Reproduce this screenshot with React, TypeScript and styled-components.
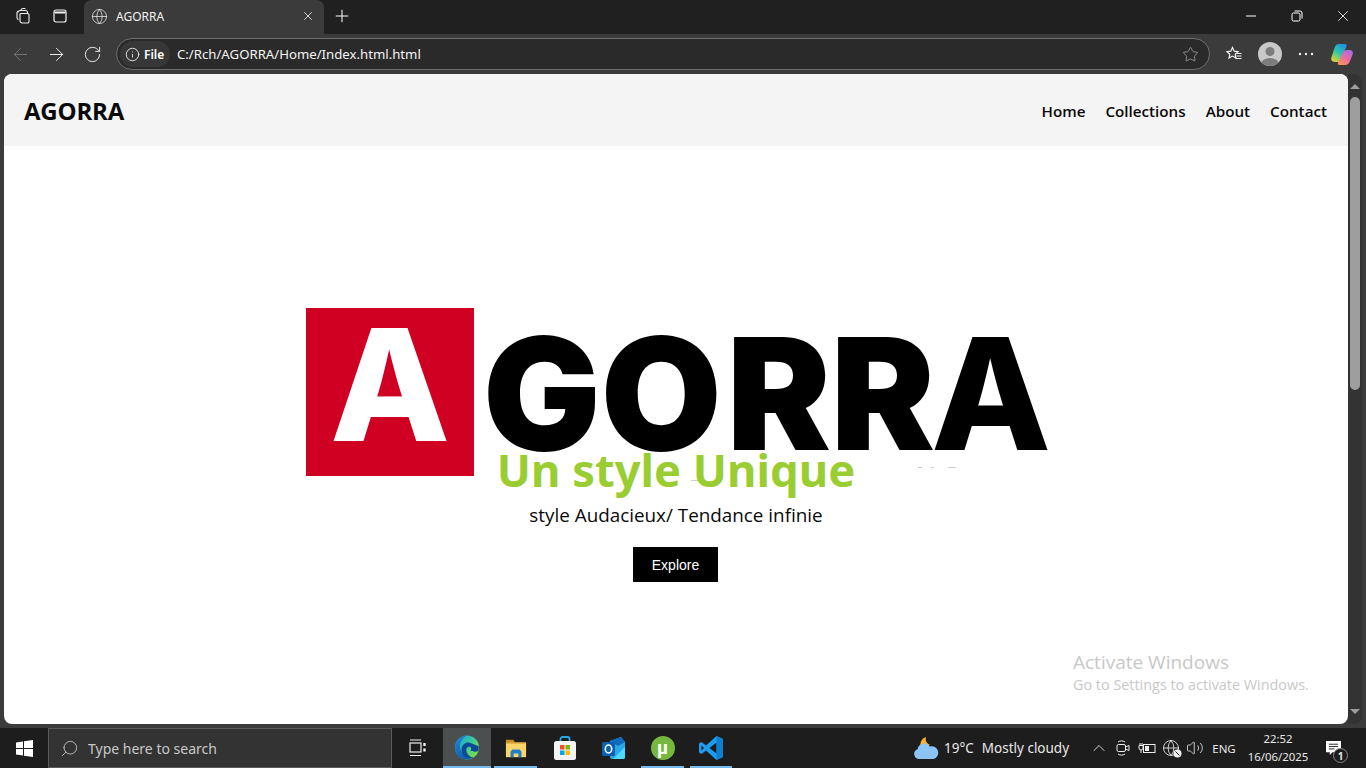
import React from "react";
import styled, { createGlobalStyle } from "styled-components";
import {
    ArrowLeft,
    ArrowRight,
    ChevronUp,
    Globe,
    Info,
    Plus,
    RotateCw,
    Search,
    Star,
    Volume2,
    X,
} from "lucide-react";

const GlobalStyle = createGlobalStyle`
    html, body {
        margin: 0;
        padding: 0;
        height: 100%;
        overflow: hidden;
        background: #1f1f1f;
    }
    * {
        box-sizing: border-box;
    }
`;

const UI_FONT = `"Noto Sans", "Open Sans", sans-serif`;

const Screen = styled.div`
    width: 1366px;
    height: 768px;
    display: flex;
    flex-direction: column;
    font-family: ${UI_FONT};
    background: #3b3b3b;
`;

const TabStrip = styled.div`
    height: 34px;
    display: flex;
    align-items: flex-start;
    background: #202020;
    color: #fff;
`;

const StripIcon = styled.div<{ $w: number }>`
    width: ${(p) => p.$w}px;
    height: 32px;
    display: flex;
    align-items: center;
    justify-content: center;
`;

const Tab = styled.div`
    width: 240px;
    height: 34px;
    padding: 0 9px 2px 7px;
    display: flex;
    align-items: center;
    background: #3b3b3b;
    border-radius: 8px 8px 0 0;
    font-size: 12px;
    color: #f2f2f2;
`;

const TabTitle = styled.span`
    flex: 1;
    margin-left: 8px;
`;

const WindowButtons = styled.div`
    margin-left: auto;
    display: flex;
`;

const WindowButton = styled.div`
    width: 46px;
    height: 32px;
    display: flex;
    align-items: center;
    justify-content: center;
`;

const Toolbar = styled.div`
    height: 40px;
    display: flex;
    align-items: center;
    padding-left: 2px;
    background: #3b3b3b;
    color: #fff;
`;

const NavButton = styled.div<{ $dim?: boolean }>`
    width: 36px;
    height: 32px;
    display: flex;
    align-items: center;
    justify-content: center;
    color: ${(p) => (p.$dim ? "#777" : "#f0f0f0")};
`;

const AddressBar = styled.div`
    width: 1094px;
    height: 32px;
    margin-left: 6px;
    padding: 0 10px 0 3px;
    display: flex;
    align-items: center;
    background: #2a2a2a;
    border: 1px solid #6e6e6e;
    border-radius: 16px;
`;

const FileChip = styled.div`
    width: 50px;
    height: 26px;
    padding-left: 5px;
    display: flex;
    align-items: center;
    gap: 4px;
    background: #373737;
    border-radius: 13px;
    font-size: 12px;
    font-weight: 600;
`;

const Url = styled.span`
    flex: 1;
    margin-left: 7px;
    font-size: 13.2px;
    color: #f4f4f4;
`;

const ToolActions = styled.div`
    display: flex;
    align-items: center;
    margin-left: 6px;
`;

const ToolAction = styled.div`
    width: 36px;
    height: 32px;
    display: flex;
    align-items: center;
    justify-content: center;
`;

const Avatar = styled.div`
    width: 24px;
    height: 24px;
    border-radius: 50%;
    overflow: hidden;
    background: #c9c9c9;
`;

const Viewport = styled.div`
    height: 650px;
    padding-left: 4px;
    display: flex;
    background: #3b3b3b;
`;

const Page = styled.main`
    position: relative;
    width: 1344px;
    height: 650px;
    display: flex;
    flex-direction: column;
    overflow: hidden;
    background: #fff;
    border-radius: 8px;
    font-family: "Open Sans", "Noto Sans", sans-serif;
`;

const Header = styled.header`
    height: 72px;
    flex: none;
    padding: 0 21px 0 20px;
    display: flex;
    align-items: center;
    justify-content: space-between;
    background: #f4f4f4;
    color: #0a0a0a;
`;

const Brand = styled.div`
    font-size: 24px;
    font-weight: 700;
    letter-spacing: -0.2px;
`;

const NavLinks = styled.nav`
    display: flex;
    gap: 20px;
    padding-top: 2px;
`;

const NavLink = styled.a`
    font-size: 15.2px;
    font-weight: 600;
    color: #0a0a0a;
`;

const Hero = styled.section`
    flex: 1;
    padding-top: 162px;
    display: flex;
    flex-direction: column;
    align-items: center;
`;

const Logo = styled.div`
    position: relative;
    width: 740px;
    height: 168px;
    display: flex;
    font-family: Inter, "Liberation Sans", sans-serif;
    line-height: 1;
`;

const LogoSquare = styled.div`
    width: 168px;
    height: 168px;
    flex: none;
    display: flex;
    justify-content: center;
    background: #d00022;
    color: #fff;
    font-size: 156px;
    font-weight: 800;
    line-height: 154px;
`;

const LogoWord = styled.div`
    margin-left: 9px;
    height: 168px;
    padding-top: 2px;
    font-size: 156px;
    line-height: 168px;
    color: #000;
    white-space: nowrap;
`;

const LogoLetter = styled.span<{ $track: number; $weight?: number }>`
    font-weight: ${(p) => p.$weight ?? 900};
    letter-spacing: ${(p) => p.$track}px;
`;

const Speck = styled.span<{ $x: number; $y: number; $w: number }>`
    position: absolute;
    left: ${(p) => p.$x}px;
    top: ${(p) => p.$y}px;
    width: ${(p) => p.$w}px;
    height: 1px;
    background: #cfcfcf;
`;

const Headline = styled.h1`
    position: relative;
    margin: -38px 0 0;
    font-family: "Noto Sans", "Open Sans", sans-serif;
    font-size: 45.3px;
    line-height: 64px;
    font-weight: 700;
    color: #9acd32;
`;

const Tagline = styled.p`
    margin: 0;
    font-size: 18.85px;
    line-height: 26px;
    color: #0a0a0a;
`;

const ExploreButton = styled.button`
    width: 85px;
    height: 35px;
    margin: 19px 1px 0 0;
    border: none;
    background: #000;
    color: #fff;
    font-family: "Liberation Sans", sans-serif;
    font-size: 14px;
    font-weight: 400;
`;

const Watermark = styled.div`
    position: absolute;
    left: 1069px;
    top: 575px;
    color: #c8c8c8;
    font-size: 14.4px;
    line-height: 20px;
`;

const WatermarkTitle = styled.div`
    font-size: 19px;
    line-height: 26px;
`;

const ScrollTrack = styled.div`
    width: 14px;
    height: 650px;
    padding: 4px 2px;
    display: flex;
    flex-direction: column;
    align-items: center;
    background: #333;
    border-radius: 0 8px 8px 0;
`;

const ScrollArrow = styled.div<{ $down?: boolean }>`
    width: 0;
    height: 0;
    flex: none;
    border-left: 5px solid transparent;
    border-right: 5px solid transparent;
    ${(p) =>
        p.$down
            ? "border-top: 5px solid #9e9e9e; margin: auto 0 6px;"
            : "border-bottom: 5px solid #9e9e9e; margin: 6px 0 8px;"}
`;

const ScrollThumb = styled.div`
    width: 10px;
    height: 293px;
    flex: none;
    border-radius: 5px;
    background: #9e9e9e;
`;

const Gap = styled.div`
    height: 4px;
    background: #3b3b3b;
`;

const Taskbar = styled.footer`
    height: 40px;
    display: flex;
    align-items: stretch;
    background: #1d1d1d;
    color: #e6e6e6;
`;

const StartButton = styled.div`
    width: 48px;
    display: flex;
    align-items: center;
    justify-content: center;
`;

const SearchBox = styled.div`
    width: 344px;
    padding-left: 11px;
    display: flex;
    align-items: center;
    gap: 9px;
    background: #333;
    border: 1px solid #5a5a5a;
    font-size: 14px;
    color: #c8c8c8;
`;

const TaskView = styled.div`
    width: 51px;
    display: flex;
    align-items: center;
    justify-content: center;
`;

const AppSlot = styled.div<{ $w: number; $open?: boolean; $active?: boolean }>`
    position: relative;
    width: ${(p) => p.$w}px;
    display: flex;
    align-items: center;
    justify-content: center;
    background: ${(p) => (p.$active ? "#4b4f50" : "transparent")};
    &::after {
        content: "";
        display: ${(p) => (p.$open ? "block" : "none")};
        position: absolute;
        left: ${(p) => (p.$active ? 0 : "3px")};
        right: ${(p) => (p.$active ? 0 : "3px")};
        bottom: 0;
        height: 2px;
        background: #76b9ed;
    }
`;

const Tray = styled.div`
    margin-left: auto;
    margin-right: 11px;
    display: flex;
    align-items: center;
    font-size: 13.5px;
    color: #e8e8e8;
`;

const Weather = styled.div`
    width: 174px;
    display: flex;
    align-items: center;
`;

const WeatherTemp = styled.span`
    margin-left: 5px;
`;

const WeatherText = styled.span`
    margin-left: 8px;
`;

const TrayIcon = styled.div`
    width: 24px;
    display: flex;
    align-items: center;
    justify-content: center;
`;

const Lang = styled.div`
    width: 34px;
    text-align: center;
    font-size: 11.5px;
`;

const Clock = styled.div`
    width: 66px;
    margin-left: 4px;
    text-align: center;
    font-size: 11.4px;
    line-height: 18px;
`;

const Notify = styled.div`
    position: relative;
    width: 44px;
    align-self: stretch;
    display: flex;
    align-items: center;
    justify-content: center;
    padding-bottom: 2px;
`;

const NotifyBadge = styled.span`
    position: absolute;
    left: 22px;
    top: 20px;
    width: 15px;
    height: 15px;
    display: flex;
    align-items: center;
    justify-content: center;
    border-radius: 50%;
    border: 1px solid #888;
    background: #1d1d1d;
    font-size: 10px;
    line-height: 1;
    font-weight: 700;
`;

const UMark = styled.div`
    width: 24px;
    height: 24px;
    display: flex;
    align-items: center;
    justify-content: center;
    border-radius: 50%;
    background: #76b83f;
    color: #fff;
    font-size: 19px;
    line-height: 22px;
    font-weight: 700;
    font-family: "Liberation Sans", sans-serif;
`;

const CollectionsIcon = () => (
    <svg width="18" height="18" viewBox="0 0 18 18" fill="none" stroke="#eee" strokeWidth="1.1">
        <path d="M5.5 6.5h7a1.5 1.5 0 0 1 1.5 1.5v6.5a1.5 1.5 0 0 1-1.5 1.5h-5A2.500 2.500 0 0 1 5 13.500V7z" />
        <path d="M3.500 12.500A2 2 0 0 1 2 10.500V5.500l1-1.500" />
        <path d="M3 5.500a2 2 0 0 1 2-2h5.500a2 2 0 0 1 2 2v1" />
        <path d="M6 3.500a2 2 0 0 1 2-2h2.500" />
    </svg>
);

const VerticalTabsIcon = () => (
    <svg width="16" height="16" viewBox="0 0 16 16" fill="none" stroke="#f2f2f2" strokeWidth="1.2">
        <rect x="2" y="2" width="12" height="12" rx="2" />
        <path d="M2.500 4.500h11" strokeWidth="2" />
    </svg>
);

const RestoreIcon = () => (
    <svg width="12" height="12" viewBox="0 0 12 12" fill="none" stroke="#fff" strokeWidth="1">
        <rect x="1" y="3" width="8" height="8" rx="1.500" />
        <path d="M3.500 1h5.500a2 2 0 0 1 2 2v5.500" />
    </svg>
);

const FavoritesIcon = () => (
    <svg width="18" height="18" viewBox="0 0 18 18" fill="none" stroke="#f2f2f2" strokeWidth="1.2">
        <path d="M7.500 2.500l1.700 3.700 3.800.4-2.800 2.600.8 3.900-3.500-2-3.500 2 .8-3.900L2 6.600l3.800-.4z" />
        <path d="M12 8.500h4.500M11.500 11h5M10.500 13.500h6" />
    </svg>
);

const AvatarFigure = () => (
    <Avatar>
        <svg width="24" height="24" viewBox="0 0 24 24">
            <circle cx="12" cy="9.500" r="4.500" fill="#7d7d7d" />
            <ellipse cx="12" cy="22" rx="9" ry="6" fill="#7d7d7d" />
        </svg>
    </Avatar>
);

const DotsIcon = () => (
    <svg width="16" height="4" viewBox="0 0 16 4" fill="#f2f2f2">
        <circle cx="2" cy="2" r="1.200" />
        <circle cx="8" cy="2" r="1.200" />
        <circle cx="14" cy="2" r="1.200" />
    </svg>
);

const CopilotIcon = () => (
    <svg width="24" height="24" viewBox="0 0 24 24">
        <defs>
            <linearGradient id="copA" x1="0.8" y1="0" x2="0.2" y2="1">
                <stop offset="0" stopColor="#1f8fe8" />
                <stop offset="0.5" stopColor="#2cc6a8" />
                <stop offset="0.85" stopColor="#a8d84a" />
                <stop offset="1" stopColor="#f0c040" />
            </linearGradient>
            <linearGradient id="copB" x1="0.8" y1="0" x2="0.2" y2="1">
                <stop offset="0" stopColor="#a868e8" />
                <stop offset="0.55" stopColor="#ee6aa0" />
                <stop offset="1" stopColor="#f59a50" />
            </linearGradient>
        </defs>
        <path d="M9 2h6c1.500 0 2 1 1.500 2.200L11 18c-.6 1.500-1.500 2-3 2H4.500C2 20 .7 18 1.300 15.800L4.500 6C5.300 3.500 6.500 2 9 2z" fill="url(#copA)" />
        <path d="M17 8h2.500c2.500 0 3.900 2 3.200 4.200L20 19c-.9 2.700-2.500 4-5 4H9.500c-1.500 0-2-1-1.500-2.200L12.500 11C13.300 9 15 8 17 8z" fill="url(#copB)" />
    </svg>
);

const WindowsLogo = () => (
    <svg width="17" height="17" viewBox="0 0 17 17" fill="#fff">
        <path d="M0 2.400L7 1.400V8H0zM8 1.300L17 0V8H8zM0 9h7v6.600L0 14.600zM8 9h9v8l-9-1.300z" />
    </svg>
);

const TaskViewIcon = () => (
    <svg width="20" height="20" viewBox="0 0 20 20" fill="none" stroke="#f0f0f0" strokeWidth="1.200">
        <rect x="2" y="5" width="11" height="9" />
        <path d="M2 2h11M2 17.500h11" />
        <path d="M16.500 5v3M16.500 10.500v3" strokeWidth="2.400" />
    </svg>
);

const EdgeIcon = () => (
    <svg width="26" height="26" viewBox="0 0 26 26">
        <defs>
            <linearGradient id="edgeA" x1="0.1" y1="0" x2="0.9" y2="0.6">
                <stop offset="0" stopColor="#1d9fd8" />
                <stop offset="0.55" stopColor="#35c6a8" />
                <stop offset="1" stopColor="#6fd858" />
            </linearGradient>
            <linearGradient id="edgeB" x1="0" y1="0" x2="0.6" y2="1">
                <stop offset="0" stopColor="#1f88d8" />
                <stop offset="1" stopColor="#0f5cb0" />
            </linearGradient>
        </defs>
        <circle cx="13" cy="12.500" r="12" fill="url(#edgeA)" />
        <path d="M1 12C1.500 5.500 7 1 13 .5 8 3 6 7 6 11c0 6 5 12 11 13-1.300.4-2.700.5-4 .5C6 24.500.5 19 1 12z" fill="url(#edgeB)" />
        <path d="M7.500 14c.5-4.500 4-7 8-6.300 3.500.6 6.500 2.800 9 3.300.4 2 .2 3.500-.3 5-2 1-5.500 1-7.700-.5 1.300-1.500.7-3.700-1.500-3.700-3 0-3.500 4-1.500 7 1.400 2.200 3.800 3.600 6.300 3.800-1.300.6-2.500 1-4 1.200C10.500 23 7 18.500 7.500 14z" fill="#0c4a98" />
    </svg>
);

const FolderIcon = () => (
    <svg width="22" height="22" viewBox="0 0 24 24">
        <path d="M1 3h8l2 3H1z" fill="#c98f1e" />
        <rect x="1" y="6" width="22" height="16" fill="#fbd56a" />
        <rect x="1" y="6" width="22" height="1.500" fill="#e8b040" />
        <path d="M6 22v-6l2-2.500h8l2 2.500v6h-3.500v-4h-5v4z" fill="#1f80c8" />
    </svg>
);

const StoreIcon = () => (
    <svg width="24" height="26" viewBox="0 0 24 26">
        <path d="M7.500 7V4a2 2 0 0 1 2-2h5a2 2 0 0 1 2 2v3" fill="none" stroke="#29a9e8" strokeWidth="1.800" />
        <rect x="1" y="6" width="22" height="19" rx="2.500" fill="#f4f4f4" />
        <rect x="7" y="10" width="4.500" height="4.500" fill="#f25022" />
        <rect x="12.500" y="10" width="4.500" height="4.500" fill="#7fba00" />
        <rect x="7" y="15.500" width="4.500" height="4.500" fill="#00a4ef" />
        <rect x="12.500" y="15.500" width="4.500" height="4.500" fill="#ffb900" />
    </svg>
);

const OutlookIcon = () => (
    <svg width="26" height="26" viewBox="0 0 26 26">
        <path d="M9 6l11-4 4 5v15a2 2 0 0 1-2 2H11a2 2 0 0 1-2-2z" fill="#28a8ea" />
        <path d="M9 6l11-4 4 5-7 4z" fill="#0f6cbd" />
        <path d="M24 12v10a2 2 0 0 1-2 2H12z" fill="#50d9ff" />
        <rect x="1" y="7" width="13" height="14" rx="1.500" fill="#0a5fae" />
        <ellipse cx="7.500" cy="14" rx="3.200" ry="4" fill="none" stroke="#fff" strokeWidth="1.600" />
    </svg>
);

const VsCodeIcon = () => (
    <svg width="26" height="26" viewBox="0 0 26 26">
        <path
            fillRule="evenodd"
            d="M18.500 1L25 4v18l-6.500 3L8 15.500 3.500 19 1 17.500V8.500L3.500 7 8 10.500zM18.500 7.500L11.500 13l7 5.500zM3.500 10.500v5L6 13z"
            fill="#1f9cf0"
        />
        <path d="M18.500 1L25 4v18l-6.500 3V18.500V7.500z" fill="#0f7fd0" />
    </svg>
);

const WeatherIcon = () => (
    <svg width="26" height="26" viewBox="0 0 26 26">
        <path d="M13 2a7 7 0 0 0 4 8l-9 3A8 8 0 0 1 13 2z" fill="#f5b030" />
        <path d="M6 24a5 5 0 0 1-1.500-9.700A7 7 0 0 1 17 11.500a5.500 5.500 0 0 1 3.500 12.500z" fill="#8cc4f5" />
    </svg>
);

const MeetIcon = () => (
    <svg width="16" height="18" viewBox="0 0 16 18" fill="none" stroke="#eee" strokeWidth="1">
        <rect x="2" y="5.500" width="8.500" height="7" rx="1.500" />
        <path d="M10.500 8l3.500-1.500v5L10.500 10" />
        <path d="M3 3c2-1.500 5-1.500 7 0M3 15c2 1.500 5 1.500 7 0" />
    </svg>
);

const BatteryIcon = () => (
    <svg width="18" height="14" viewBox="0 0 18 14" fill="none" stroke="#eee" strokeWidth="1">
        <rect x="5.500" y="3.500" width="11.500" height="8" />
        <rect x="7" y="5" width="4" height="5" fill="#eee" stroke="none" />
        <path d="M1 4.500h4v2.500a2 2 0 0 1-4 0zM2 4.500V2M4 4.500V2M3 9v3" />
    </svg>
);

const NetworkBadge = styled.svg`
    position: absolute;
    right: -2px;
    bottom: -1px;
`;

const NetworkWrap = styled.span`
    position: relative;
    display: flex;
`;

const NetworkIcon = () => (
    <NetworkWrap>
        <Globe size={18} strokeWidth={1.1} color="#eee" />
        <NetworkBadge width="9" height="9" viewBox="0 0 9 9">
            <circle cx="4.500" cy="4.500" r="4" fill="#eee" />
            <path d="M2.500 2.500l4 4" stroke="#1d1d1d" strokeWidth="1" />
        </NetworkBadge>
    </NetworkWrap>
);

const ActionCenterIcon = () => (
    <svg width="17" height="15" viewBox="0 0 18 16" fill="#fff">
        <path d="M1 1h16v12H8l-3 3v-3H1z" />
        <path d="M4 4.500h10M4 7h10M4 9.500h6" stroke="#1d1d1d" strokeWidth="1" />
    </svg>
);

const FlippedSearch = styled(Search)`
    transform: scaleX(-1);
`;

const App: React.FC = () => {
    return (
        <Screen>
            <GlobalStyle />
            <TabStrip>
                <StripIcon $w={48}>
                    <CollectionsIcon />
                </StripIcon>
                <StripIcon $w={24}>
                    <VerticalTabsIcon />
                </StripIcon>
                <StripIcon $w={12} />
                <Tab>
                    <Globe size={17} strokeWidth={1.1} color="#e8e8e8" />
                    <TabTitle>AGORRA</TabTitle>
                    <X size={14} strokeWidth={1.4} color="#eee" />
                </Tab>
                <StripIcon $w={36}>
                    <Plus size={20} strokeWidth={1.2} color="#fff" />
                </StripIcon>
                <WindowButtons>
                    <WindowButton>
                        <svg width="12" height="2" viewBox="0 0 12 2">
                            <path d="M1 1h10" stroke="#fff" strokeWidth="1" />
                        </svg>
                    </WindowButton>
                    <WindowButton>
                        <RestoreIcon />
                    </WindowButton>
                    <WindowButton>
                        <X size={18} strokeWidth={1.1} color="#fff" />
                    </WindowButton>
                </WindowButtons>
            </TabStrip>
            <Toolbar>
                <NavButton $dim>
                    <ArrowLeft size={21} strokeWidth={1.1} />
                </NavButton>
                <NavButton>
                    <ArrowRight size={21} strokeWidth={1.1} />
                </NavButton>
                <NavButton>
                    <RotateCw size={19} strokeWidth={1.2} />
                </NavButton>
                <AddressBar>
                    <FileChip>
                        <Info size={15} strokeWidth={1.3} />
                        File
                    </FileChip>
                    <Url>C:/Rch/AGORRA/Home/Index.html.html</Url>
                    <Star size={17} strokeWidth={1.1} color="#a8a8a8" />
                </AddressBar>
                <ToolActions>
                    <ToolAction>
                        <FavoritesIcon />
                    </ToolAction>
                    <ToolAction>
                        <AvatarFigure />
                    </ToolAction>
                    <ToolAction>
                        <DotsIcon />
                    </ToolAction>
                    <ToolAction>
                        <CopilotIcon />
                    </ToolAction>
                </ToolActions>
            </Toolbar>
            <Viewport>
                <Page>
                    <Header>
                        <Brand>AGORRA</Brand>
                        <NavLinks>
                            <NavLink>Home</NavLink>
                            <NavLink>Collections</NavLink>
                            <NavLink>About</NavLink>
                            <NavLink>Contact</NavLink>
                        </NavLinks>
                    </Header>
                    <Hero>
                        <Logo>
                            <LogoSquare>A</LogoSquare>
                            <LogoWord>
                                <LogoLetter $track={0}>G</LogoLetter>
                                <LogoLetter $track={5}>O</LogoLetter>
                                <LogoLetter $track={0}>R</LogoLetter>
                                <LogoLetter $track={-4}>R</LogoLetter>
                                <LogoLetter $track={0} $weight={800}>
                                    A
                                </LogoLetter>
                            </LogoWord>
                            <Speck $x={385} $y={172} $w={10} />
                            <Speck $x={612} $y={159} $w={4} />
                            <Speck $x={625} $y={159} $w={3} />
                            <Speck $x={642} $y={159} $w={8} />
                        </Logo>
                        <Headline>Un style Unique</Headline>
                        <Tagline>style Audacieux/ Tendance infinie</Tagline>
                        <ExploreButton>Explore</ExploreButton>
                    </Hero>
                    <Watermark>
                        <WatermarkTitle>Activate Windows</WatermarkTitle>
                        Go to Settings to activate Windows.
                    </Watermark>
                </Page>
                <ScrollTrack>
                    <ScrollArrow />
                    <ScrollThumb />
                    <ScrollArrow $down />
                </ScrollTrack>
            </Viewport>
            <Gap />
            <Taskbar>
                <StartButton>
                    <WindowsLogo />
                </StartButton>
                <SearchBox>
                    <FlippedSearch size={19} strokeWidth={1.1} />
                    Type here to search
                </SearchBox>
                <TaskView>
                    <TaskViewIcon />
                </TaskView>
                <AppSlot $w={48} $open $active>
                    <EdgeIcon />
                </AppSlot>
                <AppSlot $w={49} $open>
                    <FolderIcon />
                </AppSlot>
                <AppSlot $w={49}>
                    <StoreIcon />
                </AppSlot>
                <AppSlot $w={49}>
                    <OutlookIcon />
                </AppSlot>
                <AppSlot $w={49} $open>
                    <UMark>µ</UMark>
                </AppSlot>
                <AppSlot $w={48} $open>
                    <VsCodeIcon />
                </AppSlot>
                <Tray>
                    <Weather>
                        <WeatherIcon />
                        <WeatherTemp>19°C</WeatherTemp>
                        <WeatherText>Mostly cloudy</WeatherText>
                    </Weather>
                    <TrayIcon>
                        <ChevronUp size={20} strokeWidth={1.1} />
                    </TrayIcon>
                    <TrayIcon>
                        <MeetIcon />
                    </TrayIcon>
                    <TrayIcon>
                        <BatteryIcon />
                    </TrayIcon>
                    <TrayIcon>
                        <NetworkIcon />
                    </TrayIcon>
                    <TrayIcon>
                        <Volume2 size={18} strokeWidth={1.1} />
                    </TrayIcon>
                    <Lang>ENG</Lang>
                    <Clock>
                        22:52
                        <br />
                        16/06/2025
                    </Clock>
                    <Notify>
                        <ActionCenterIcon />
                        <NotifyBadge>1</NotifyBadge>
                    </Notify>
                </Tray>
            </Taskbar>
        </Screen>
    );
};

export default App;
